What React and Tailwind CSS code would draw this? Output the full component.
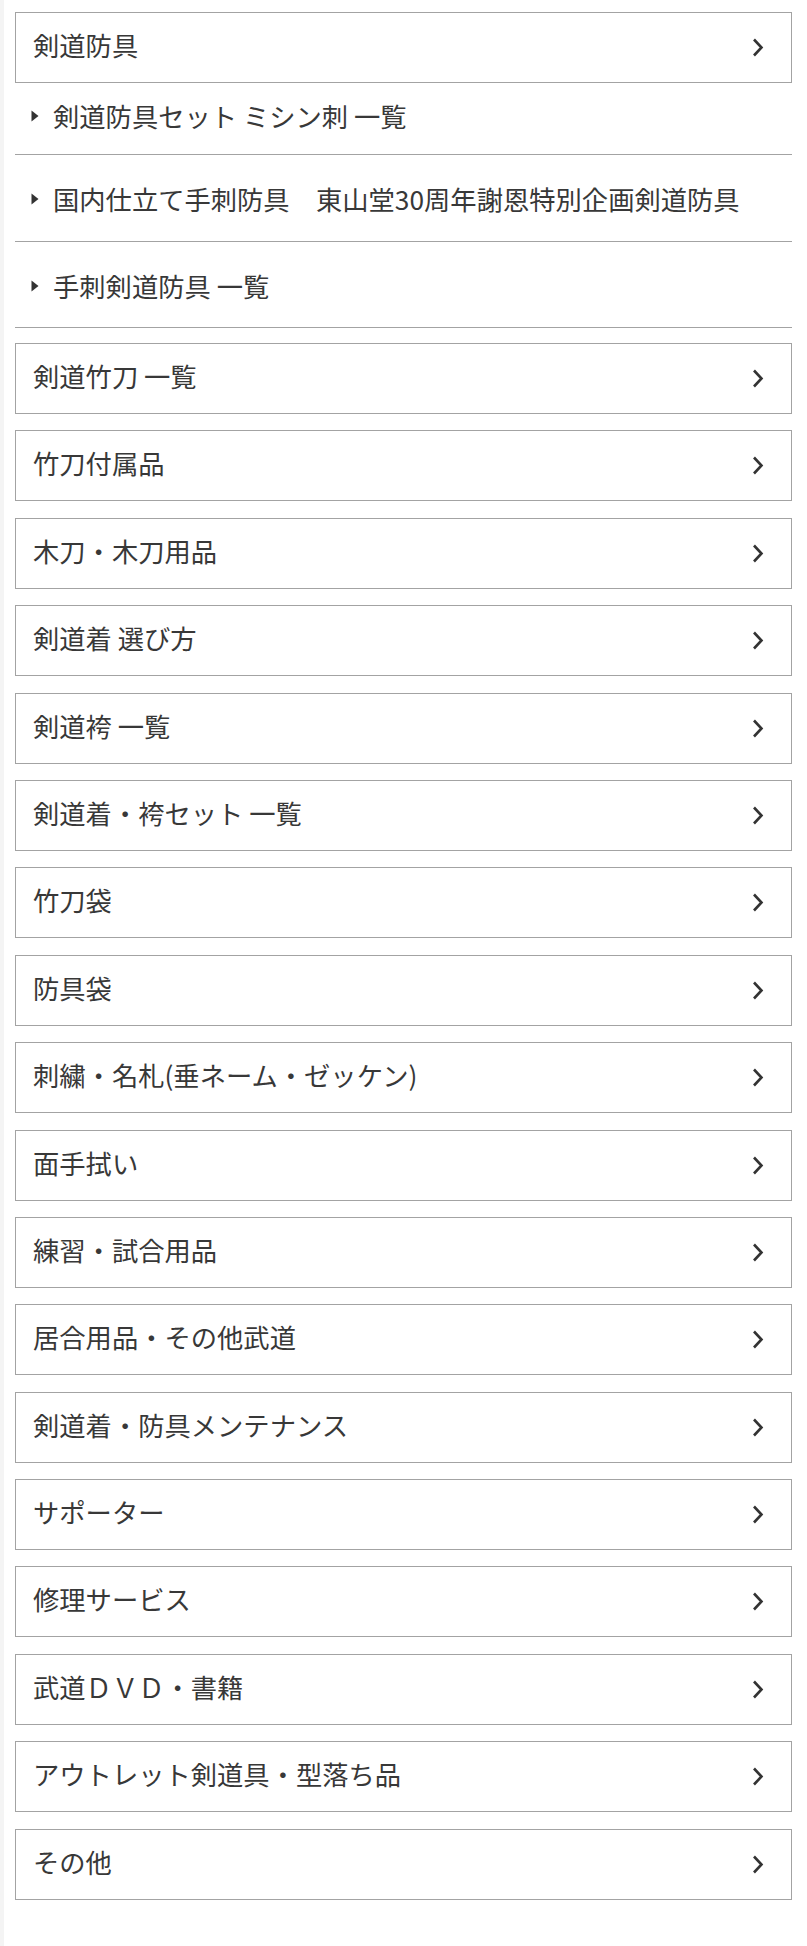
const SUB_ITEMS = [
  { label: '剣道防具セット ミシン刺 一覧', pad: 'pt-[15px] pb-[20px]' },
  { label: '国内仕立て手刺防具　東山堂30周年謝恩特別企画剣道防具', pad: 'pt-[26px] pb-[24px]' },
  { label: '手刺剣道防具 一覧', pad: 'pt-[26px] pb-[23px]' },
]

const CATEGORIES = [
  '剣道竹刀 一覧',
  '竹刀付属品',
  '木刀・木刀用品',
  '剣道着 選び方',
  '剣道袴 一覧',
  '剣道着・袴セット 一覧',
  '竹刀袋',
  '防具袋',
  '刺繍・名札(垂ネーム・ゼッケン)',
  '面手拭い',
  '練習・試合用品',
  '居合用品・その他武道',
  '剣道着・防具メンテナンス',
  'サポーター',
  '修理サービス',
  '武道ＤＶＤ・書籍',
  'アウトレット剣道具・型落ち品',
  'その他',
]

function Chevron() {
  return (
    <svg width="12" height="19" viewBox="0 0 12 19" fill="none" className="shrink-0">
      <path d="M2 1.5 L9.5 9.5 L2 17.5" stroke="#333" strokeWidth="2.6" />
    </svg>
  )
}

function Caret() {
  return (
    <svg width="8" height="12" viewBox="0 0 8 12" className="shrink-0">
      <path d="M0.5 0.5 L7.5 6 L0.5 11.5 Z" fill="#333" />
    </svg>
  )
}

function CategoryBox({ label }) {
  return (
    <a
      href="#"
      className="flex items-center justify-between h-[71px] border border-[#a3a3a3] bg-white pl-[17px] pr-[27px]"
    >
      <span className="leading-[36px] pb-[5px]">{label}</span>
      <Chevron />
    </a>
  )
}

export default function App() {
  return (
    <div
      className="min-h-[1946px] bg-white border-l-[4px] border-[#f4f4f4] text-[26.3px] text-[#383838]"
      style={{ fontFamily: '"Noto Sans CJK JP", "Noto Sans", sans-serif' }}
    >
      <div className="ml-[11px] mr-[15px] pt-[12px]">
        {/* 剣道防具 */}
        <CategoryBox label="剣道防具" />
        <ul>
          {SUB_ITEMS.map(({ label, pad }) => (
            <li key={label} className={`border-b border-[#a3a3a3] ${pad}`}>
              <a href="#" className="flex items-center gap-[14px] pl-[16px] leading-[36px]">
                <Caret />
                <span>{label}</span>
              </a>
            </li>
          ))}
        </ul>

        {/* other categories */}
        <div className="flex flex-col gap-[16.4px] mt-[15px]">
          {CATEGORIES.map((label) => (
            <CategoryBox key={label} label={label} />
          ))}
        </div>
      </div>
    </div>
  )
}
